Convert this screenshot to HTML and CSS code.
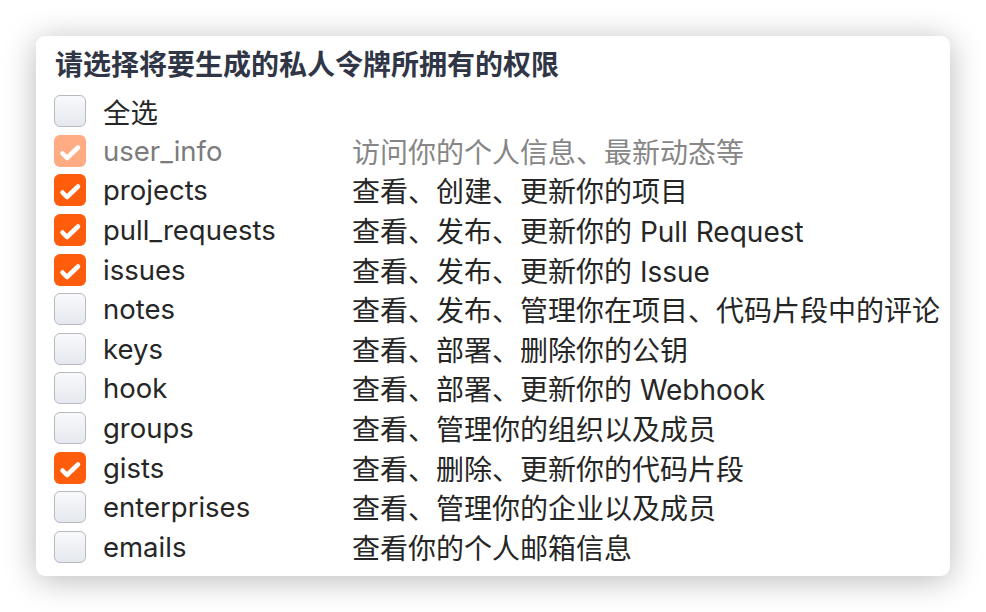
FILE: index.html
```html
<!DOCTYPE html>
<html lang="zh-CN">
<head>
<meta charset="utf-8">
<title>权限</title>
<link rel="stylesheet" href="styles.css">
</head>
<body>
<div class="card">
  <div class="title">请选择将要生成的私人令牌所拥有的权限</div>
  <div class="list">
    <div class="row">
      <span class="box"></span>
      <span class="label">全选</span>
      <span class="desc"></span>
    </div>
    <div class="row disabled">
      <span class="box checked"><svg viewBox="0 0 32 32"><path d="M8.5 18.5 L13 23 L24 12.5"/></svg></span>
      <span class="label">user_info</span>
      <span class="desc">访问你的个人信息、最新动态等</span>
    </div>
    <div class="row">
      <span class="box checked"><svg viewBox="0 0 32 32"><path d="M8.5 18.5 L13 23 L24 12.5"/></svg></span>
      <span class="label">projects</span>
      <span class="desc">查看、创建、更新你的项目</span>
    </div>
    <div class="row">
      <span class="box checked"><svg viewBox="0 0 32 32"><path d="M8.5 18.5 L13 23 L24 12.5"/></svg></span>
      <span class="label">pull_requests</span>
      <span class="desc">查看、发布、更新你的 Pull Request</span>
    </div>
    <div class="row">
      <span class="box checked"><svg viewBox="0 0 32 32"><path d="M8.5 18.5 L13 23 L24 12.5"/></svg></span>
      <span class="label">issues</span>
      <span class="desc">查看、发布、更新你的 Issue</span>
    </div>
    <div class="row">
      <span class="box"></span>
      <span class="label">notes</span>
      <span class="desc">查看、发布、管理你在项目、代码片段中的评论</span>
    </div>
    <div class="row">
      <span class="box"></span>
      <span class="label">keys</span>
      <span class="desc">查看、部署、删除你的公钥</span>
    </div>
    <div class="row">
      <span class="box"></span>
      <span class="label">hook</span>
      <span class="desc">查看、部署、更新你的 Webhook</span>
    </div>
    <div class="row">
      <span class="box"></span>
      <span class="label">groups</span>
      <span class="desc">查看、管理你的组织以及成员</span>
    </div>
    <div class="row">
      <span class="box checked"><svg viewBox="0 0 32 32"><path d="M8.5 18.5 L13 23 L24 12.5"/></svg></span>
      <span class="label">gists</span>
      <span class="desc">查看、删除、更新你的代码片段</span>
    </div>
    <div class="row">
      <span class="box"></span>
      <span class="label">enterprises</span>
      <span class="desc">查看、管理你的企业以及成员</span>
    </div>
    <div class="row">
      <span class="box"></span>
      <span class="label">emails</span>
      <span class="desc">查看你的个人邮箱信息</span>
    </div>
  </div>
</div>
</body>
</html>
```
FILE: styles.css
```css
html, body {
  margin: 0;
  padding: 0;
  background: #ffffff;
}
body {
  padding: 36px;
  font-family: Inter, "Noto Sans CJK SC", sans-serif;
}
.card {
  width: 914px;
  height: 540px;
  box-sizing: border-box;
  background: #ffffff;
  border-radius: 9px;
  box-shadow: 0 4px 32px rgba(0, 0, 0, 0.28);
  padding: 9px 18px 8px 18px;
}
.title {
  font-size: 28px;
  line-height: 40px;
  font-weight: 700;
  color: #303646;
  padding-left: 1px;
}
.list {
  margin-top: 6px;
}
.row {
  display: grid;
  grid-template-columns: 32px 232px 1fr;
  column-gap: 17px;
  align-items: center;
  height: 39.64px;
  font-size: 28px;
  color: #262626;
  white-space: nowrap;
}
.box {
  width: 32px;
  height: 32px;
  box-sizing: border-box;
  border-radius: 6px;
  border: 1.5px solid #b7bac1;
  background: linear-gradient(#f8f9fb, #e5e8ee);
  display: flex;
}
.box.checked {
  border: none;
  background: #ff5c0b;
}
.box svg {
  width: 32px;
  height: 32px;
}
.box svg path {
  fill: none;
  stroke: #ffffff;
  stroke-width: 4.5;
  stroke-linecap: round;
  stroke-linejoin: round;
}
.label {
  font-size: 27.5px;
}
.disabled .box.checked {
  background: #ffac84;
}
.disabled .label {
  color: #7b7b7b;
}
.disabled .desc {
  color: #868686;
}
```
